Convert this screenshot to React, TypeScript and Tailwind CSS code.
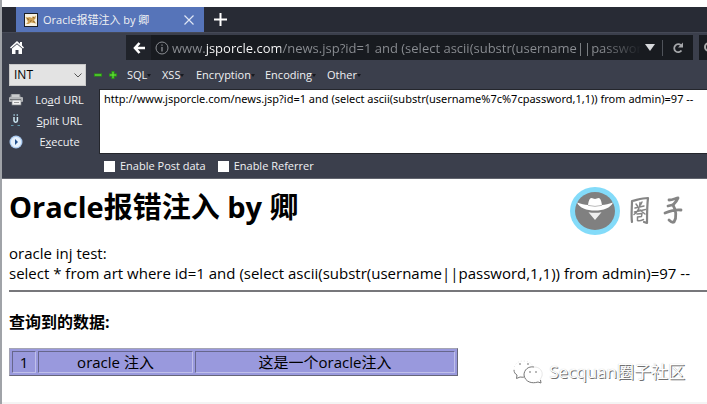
import type { ReactNode } from "react";

const menus = [
  { label: "SQL", width: "w-[35px]" },
  { label: "XSS", width: "w-[34px]" },
  { label: "Encryption", width: "w-[69px]" },
  { label: "Encoding", width: "w-[62px]" },
  { label: "Other", width: "w-[40px]" },
];

function CatIcon() {
  return (
    <svg viewBox="0 0 14 14" className="size-[14px] shrink-0" aria-hidden="true">
      <rect width="14" height="14" fill="#1d1f24" />
      <rect x="1" y="1" width="12" height="12" fill="#f6f1e2" />
      <path d="M1.500 4l2 .5 2.500-.5 1.500 1L9 3l1 1 2-1.500-.5 3L10 7l1 2 1.500 1.500-3-.5L7 9.500 4.500 11H2L4 9 3 7z" fill="#cfa052" />
      <path d="M3 5.500l2 1M9 4.500l1.500.5M6 8.500l1.500-1M9.500 8l1 1.500" stroke="#6b4d22" strokeWidth=".8" fill="none" />
    </svg>
  );
}

function PrinterIcon() {
  return (
    <svg viewBox="0 0 14 13" className="h-[13px] w-[14px]" aria-hidden="true">
      <path d="M2 1h9l1 4H1z" fill="#8d9095" />
      <path d="M3 1.500h7l.6 2.500H2.600z" fill="#c9cbcd" />
      <rect y="4" width="14" height="5" rx="1" fill="#b4b6b9" />
      <path d="M1 6.500h11" stroke="#6d7075" />
      <rect x="3" y="7" width="9" height="5" fill="#f1f1f1" stroke="#85888c" strokeWidth=".7" />
      <path d="M5 9.500h5" stroke="#999" />
    </svg>
  );
}

function SplitIcon() {
  return (
    <svg viewBox="0 0 14 13" className="h-[13px] w-[14px]" aria-hidden="true">
      <path d="M5 3v3.500a1.700 1.700 0 0 0 3.400 0V3" fill="none" stroke="#cfeaf5" strokeWidth="1.500" />
      <path d="M4.500 1h1.300M7.600 1h1.300" stroke="#a9d4e6" strokeWidth="1.300" />
      <path d="M2 11.500h2.500M8.500 11.500H11" stroke="#5f97a9" />
    </svg>
  );
}

function ExecuteIcon() {
  return (
    <svg viewBox="0 0 14 14" className="size-[14px]" aria-hidden="true">
      <circle cx="7" cy="7" r="6.500" fill="#a9c9ef" />
      <circle cx="7" cy="7" r="5.200" fill="#e6f1fd" />
      <path d="M6 4l3 3-3 3z" fill="#23518f" />
    </svg>
  );
}

function SpyLogo() {
  return (
    <svg viewBox="0 0 50 48" className="h-12 w-[50px]" aria-hidden="true">
      <ellipse cx="25" cy="24" rx="25" ry="24" fill="#83dbf9" />
      <ellipse cx="25" cy="24" rx="20" ry="19" fill="#808080" />
      <path d="M18 18c.5-3.500 1.500-7 3.500-7 1.400 0 2 1 3.500 1s2.100-1 3.500-1c2 0 3 3.500 3.500 7 3.500-.4 6.500-.8 11-2.500-2.500 5.500-9.500 8-18 8s-15.500-2.500-18-8c4.500 1.700 7.500 2.100 11 2.500z" fill="#fff" />
      <path d="M18 18.300q7 2.200 14 0" stroke="#aaa" strokeWidth=".8" fill="none" />
      <path d="M18.500 25.200q6.500 1.300 13 0L25 33z" fill="#efefef" />
    </svg>
  );
}

function BrushLettering() {
  return (
    <svg viewBox="0 0 54 30" className="h-[30px] w-[54px]" role="img" aria-label="圈子">
      <g fill="none" stroke="#858585" strokeLinecap="round" strokeLinejoin="round">
        <path d="M3 5c0 7-1 14 0 21M3 5c5-1 10-3 16-3-1 8-1 17-1 25l-3-1" strokeWidth="2.200" />
        <path d="M7 8l1.500 2M13 6l-1.500 3M6 12l9-2M5.500 16l11-2.500M11 6.500c0 5-2 9-6 12M11 14l5 4M8 18l5-.5-.5 3-4 .5v3.500c2 1 4 0 6-1" strokeWidth="1.500" />
        <path d="M40 4c4 0 7-2 9-2-1 3-3 5-5 7" strokeWidth="2.800" />
        <path d="M39 10l4-1M44 9c3 5 4 12 1 17-2 1-4-1-5-2M36 17c5-2 10-4 16-3" strokeWidth="2.800" />
      </g>
    </svg>
  );
}

function ChatIcon() {
  return (
    <svg viewBox="0 0 32 26" className="h-[26px] w-8" fill="none" aria-hidden="true">
      <path d="M2 11C2 5 6 2 11 2c5 0 9 2 10 6" stroke="#ddd" strokeWidth=".7" strokeDasharray="1 2" />
      <path d="M2 11c0 2 1 4 3 5l-.5 3.500L8 18c1 0 3 .5 4 0" stroke="#777" />
      <path d="M22 8c-6-1-10 3-10 8 1 7 8 9 14 7l3 1-.5-3" stroke="#777" />
      <path d="M22 8c6 0 9 4 8 9l-2 4" stroke="#ddd" strokeWidth=".7" />
      <path d="M7 5h2M15 5h2M17 13h2M23 13h2" stroke="#777" strokeWidth="1.200" />
    </svg>
  );
}

function Action({ icon, children, keyName }: { icon: ReactNode; children: ReactNode; keyName: string }) {
  return (
    <button type="button" accessKey={keyName} className="flex h-[21px] w-full items-center pl-[6px] text-left">
      <span className="flex w-4 shrink-0 justify-center">{icon}</span>
      <span className="flex-1 pr-[4px] text-center">{children}</span>
    </button>
  );
}

export default function App() {
  return (
    <div className="border-l-2 border-[#a0a3a8] bg-white pt-[7px] font-['Open_Sans','Noto_Sans_CJK_SC',sans-serif] text-black">
      <header className="bg-[#3b3f4c] text-[11px] leading-4 text-[#f0f1f3]">
        <div className="flex h-[26px] items-stretch border-b border-[#454956] bg-[#282b35] pl-[14px]">
          <div className="flex w-[188px] items-center bg-[#5674b9] pr-2 pl-2">
            <CatIcon />
            <span className="ml-[5px] flex-1 whitespace-nowrap">Oracle报错注入 by 卿</span>
            <button type="button" aria-label="Close tab" className="p-[2px]">
              <svg viewBox="0 0 10 10" className="size-[10px]" stroke="#dfe6f5" strokeWidth="1.200"><path d="M.5.5l9 9M9.500.5l-9 9" /></svg>
            </button>
          </div>
          <button type="button" aria-label="New tab" className="ml-[10px]">
            <svg viewBox="0 0 13 13" className="size-[13px]" stroke="#fff" strokeWidth="2"><path d="M6.500 0v13M0 6.500h13" /></svg>
          </button>
        </div>

        <div className="flex h-[29px] items-center pt-[2px] pb-[2px]">
          <button type="button" aria-label="Home" className="ml-2 shrink-0">
            <svg viewBox="0 0 14 13" className="h-[13px] w-[14px]" fill="#fff"><path d="M7 0L0 6.500l1 1 6-5.300 6 5.300 1-1-2-1.900V1h-2v1.700z" /><path d="M2 7.500l5-4.300 5 4.300V13H8.500V9h-3v4H2z" /></svg>
          </button>
          <div className="ml-[102px] flex h-[25px] min-w-0 flex-1 items-center bg-[#181b20]">
            <button type="button" aria-label="Back" className="flex h-full w-[25px] shrink-0 items-center justify-center bg-[#20232a]">
              <svg viewBox="0 0 12 12" className="size-3" fill="none" stroke="#fff" strokeWidth="2.600"><path d="M6.500 1L2 6l4.500 5M2 6h10" /></svg>
            </button>
            <svg viewBox="0 0 14 14" className="ml-1 size-[14px] shrink-0" fill="none" stroke="#8b8e93" aria-hidden="true"><circle cx="7" cy="7" r="6" /><path d="M7 6v4.500M7 3.500v1.300" strokeWidth="1.300" /></svg>
            <input
              aria-label="Address"
              readOnly
              value="www.jsporcle.com/news.jsp?id=1 and (select ascii(substr(username||password,1,1)) from admin)=97 --"
              className="ml-[3px] h-full w-0 min-w-0 flex-1 bg-[linear-gradient(to_right,#8b8e93_33px,#fff_33px,#fff_109px,#8b8e93_109px,#8b8e93_430px,transparent_470px)] bg-clip-text p-0 text-[13px] text-transparent outline-none"
            />
            <button type="button" aria-label="Show history" className="flex h-full w-[15px] shrink-0 items-center justify-center">
              <svg viewBox="0 0 10 7" className="h-[7px] w-[10px]" fill="#d6d8db"><path d="M0 0h10L5 7z" /></svg>
            </button>
            <span className="ml-[5px] h-4 w-px bg-[#4f535a]" />
            <button type="button" aria-label="Reload" className="flex h-full w-[30px] shrink-0 items-center justify-center">
              <svg viewBox="0 0 12 12" className="size-3" fill="none" stroke="#a5a7aa" strokeWidth="1.800"><path d="M9.500 8.500A4 4 0 1 1 9 3.300" /><path d="M11 .5v5H6z" fill="#a5a7aa" stroke="none" /></svg>
            </button>
          </div>
          <div className="ml-[6px] flex h-[25px] w-2 shrink-0 items-center overflow-hidden bg-[#181b20] pl-[5px]">
            <svg viewBox="0 0 12 12" className="size-3 shrink-0" fill="none" stroke="#aaa" strokeWidth="2" aria-hidden="true"><circle cx="5" cy="5" r="4" /></svg>
          </div>
        </div>

        <div className="flex h-[27px] items-center pb-px pl-[7px]">
          <div className="relative mr-2 h-[22px] w-[77px] shrink-0">
            <select aria-label="Field type" className="h-full w-full appearance-none border border-[#c8c8c8] bg-[#e3e3e3] pl-1 text-[12px] text-black">
              <option>INT</option>
            </select>
            <svg viewBox="0 0 8 5" className="pointer-events-none absolute top-[9px] right-[4px] h-[5px] w-2" fill="none" stroke="#555" aria-hidden="true"><path d="M.5.5L4 4 7.500.5" /></svg>
          </div>
          <button type="button" aria-label="Remove" className="flex w-[8px] shrink-0"><svg viewBox="0 0 8 8" className="size-2"><path d="M0 4h8" stroke="#2b9a13" strokeWidth="3" /><path d="M1 4h6" stroke="#6bea3c" /></svg></button>
          <button type="button" aria-label="Add" className="mr-[10px] ml-[7px] flex w-[8px] shrink-0"><svg viewBox="0 0 8 8" className="size-2"><path d="M0 4h8M4 0v8" stroke="#2b9a13" strokeWidth="3" /><path d="M1 4h6M4 1v6" stroke="#6bea3c" /></svg></button>
          {menus.map((menu) => (
            <button key={menu.label} type="button" className={`flex shrink-0 items-center whitespace-nowrap ${menu.width}`}>
              {menu.label}
              <svg viewBox="0 0 4 3" className="h-[3px] w-1" fill="#17191f"><path d="M0 0h4L2 3z" /></svg>
            </button>
          ))}
        </div>

        <div className="flex h-[65px]">
          <div className="w-[97px] shrink-0">
            <Action icon={<PrinterIcon />} keyName="a">Lo<u>a</u>d URL</Action>
            <Action icon={<SplitIcon />} keyName="s"><u>S</u>plit URL</Action>
            <Action icon={<ExecuteIcon />} keyName="x">E<u>x</u>ecute</Action>
          </div>
          <textarea
            aria-label="Request URL"
            spellCheck={false}
            defaultValue="http://www.jsporcle.com/news.jsp?id=1 and (select ascii(substr(username%7c%7cpassword,1,1)) from admin)=97 --"
            className="min-w-0 flex-1 resize-none overflow-hidden border border-r-0 border-[#24262c] bg-white py-px pl-1 font-['Noto_Sans',sans-serif] text-[11px] leading-4 text-black outline-none"
          />
        </div>

        <div className="flex h-[25px] items-center gap-3 border-b border-[#62656e] pl-[102px]">
          <label className="flex items-center gap-[5px]"><input type="checkbox" className="size-[11px] appearance-none bg-white checked:bg-[#5674b9]" />Enable Post data</label>
          <label className="flex items-center gap-[5px]"><input type="checkbox" className="size-[11px] appearance-none bg-white checked:bg-[#5674b9]" />Enable Referrer</label>
        </div>
      </header>

      <main className="bg-white pl-[7px]">
        <div className="flex h-[64px] items-start justify-between pt-2 pr-6">
          <h1 className="text-[29px] leading-10 font-bold whitespace-nowrap">Oracle报错注入 by 卿</h1>
          <div className="flex items-center gap-[9px]">
            <SpyLogo />
            <BrushLettering />
          </div>
        </div>
        <p className="text-[15px] leading-5 whitespace-nowrap">
          oracle inj test:<br />
          select * from art where id=1 and (select ascii(substr(username||password,1,1)) from admin)=97 --
        </p>
        <hr className="mt-[7px] border-t-2 border-[#77777b]" />
        <h2 className="mt-[18px] text-[16px] leading-6 font-bold">查询到的数据:</h2>
        <div className="mt-[14px] flex items-start justify-between pr-[22px]">
          <table className="w-[449px] border-separate border-spacing-[2px] border border-t-[#a4a4b4] border-r-[#66667a] border-b-[#66667a] border-l-[#a4a4b4] bg-[#9999dd] text-center text-[15px] leading-5">
            <tbody>
              <tr className="[&>td]:border [&>td]:border-t-[#66668c] [&>td]:border-r-[#c0c0ea] [&>td]:border-b-[#c0c0ea] [&>td]:border-l-[#66668c] [&>td]:p-0">
                <td className="w-[24px]">1</td>
                <td className="w-[155px]">oracle 注入</td>
                <td>这是一个oracle注入</td>
              </tr>
            </tbody>
          </table>
          <div className="flex items-center gap-[5px] pt-[11px]">
            <ChatIcon />
            <span className="text-[17px] leading-6 whitespace-nowrap text-white [text-shadow:1px_1px_0_#707070,0_0_1px_#bbb]">Secquan圈子社区</span>
          </div>
        </div>
      </main>
      <footer className="mt-[17px] h-[3px] bg-[#f4f4f4]" />
    </div>
  );
}
